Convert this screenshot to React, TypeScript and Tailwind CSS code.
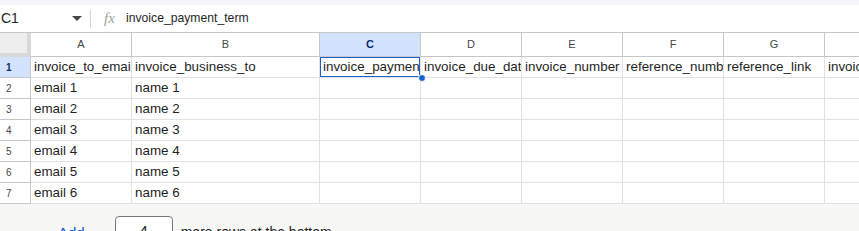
import React from 'react';

const cols = ['A', 'B', 'C', 'D', 'E', 'F', 'G', 'H'];
const headerRow = [
  'invoice_to_email',
  'invoice_business_to',
  'invoice_payment_term',
  'invoice_due_date',
  'invoice_number',
  'reference_number',
  'reference_link',
  'invoice_amount',
];
const rows = [1, 2, 3, 4, 5, 6].map((n) => [`email ${n}`, `name ${n}`]);

const gridCols = 'grid grid-cols-[31px_101px_188px_101px_101px_101px_101px_101px_101px]';

const App = () => {
  return (
    <div className="relative w-[859px] h-[231px] overflow-hidden bg-[#f7f8f5] text-[#1f1f1f]" style={{ fontFamily: '"Liberation Sans", Arial, sans-serif' }}>
      {/* top strip */}
      <div className="h-[5px] bg-[#f3f5f8]" />

      {/* formula bar */}
      <div className="h-[28px] bg-white border-b border-[#c7c7c7] flex items-center">
        <div className="w-[90px] flex items-center justify-between pr-[8px]">
          <span className="text-[14px] pl-[1px]">C1</span>
          <svg width="10" height="6" viewBox="0 0 10 6">
            <path d="M0 0 L10 0 L5 5 Z" fill="#444746" />
          </svg>
        </div>
        <div className="w-px h-[18px] bg-[#d5d5d5]" />
        <span className="ml-[13px] w-[14px] text-[15px] italic text-[#a0a0a0]" style={{ fontFamily: '"Liberation Serif", serif' }}>
          fx
        </span>
        <span className="ml-[8px] text-[12.2px] text-[#1f1f1f]">invoice_payment_term</span>
      </div>

      {/* grid */}
      <div className="bg-white w-[926px]">
        {/* column header */}
        <div className={`${gridCols} h-[24px]`}>
          <div className="bg-[#eeeeee] border-r-[4px] border-b-[4px] border-[#d8d8d8]" />
          {cols.map((c) => (
            <div
              key={c}
              className={
                c === 'C'
                  ? 'bg-[#d3e3fd] border-r border-b border-[#c7c7c7] flex items-center justify-center text-[11px] font-bold text-[#0b2d72]'
                  : 'bg-white border-r border-b border-[#c7c7c7] flex items-center justify-center text-[11px] text-[#444746]'
              }
            >
              {c}
            </div>
          ))}
        </div>

        {/* row 1 */}
        <div className={`${gridCols} h-[21px]`}>
          <div className="bg-[#d3e3fd] border-r border-b border-[#c7c7c7] flex items-center pl-[6px] text-[10px] font-bold text-[#0b2d72]">
            1
          </div>
          {headerRow.map((t, i) => (
            <div
              key={t}
              className="relative border-r border-b border-[#e1e1e1] flex items-center pl-[3px] overflow-hidden whitespace-nowrap text-[13.4px] text-[#1f1f1f]"
            >
              {t}
              {i === 2 && <div className="absolute inset-[-1px] border-2 border-[#1a5fd6]" />}
            </div>
          ))}
        </div>

        {/* data rows */}
        {rows.map((r, ri) => (
          <div key={ri} className={`${gridCols} h-[21px]`}>
            <div className="bg-white border-r border-b border-[#c7c7c7] flex items-center pl-[6px] text-[10px] text-[#444746]">
              {ri + 2}
            </div>
            {cols.map((c, ci) => (
              <div
                key={c}
                className="border-r border-b border-[#e1e1e1] flex items-center pl-[3px] overflow-hidden whitespace-nowrap text-[13.4px] text-[#1f1f1f]"
              >
                {r[ci] ?? ''}
              </div>
            ))}
          </div>
        ))}
      </div>

      {/* add rows */}
      <div className="flex items-start pt-[12px]">
        <span className="ml-[58px] mt-[6px] text-[15px] font-medium text-[#0b57d0]">Add</span>
        <div className="ml-[30px] w-[58px] h-[30px] rounded-[4px] border border-[#747775] bg-white flex items-center justify-center text-[15px] text-[#1f1f1f]">
          4
        </div>
        <span className="ml-[8px] mt-[6px] text-[14px] text-[#1f1f1f]">more rows at the bottom</span>
      </div>

      {/* fill handle */}
      <div className="absolute left-[418px] top-[74px] w-[8px] h-[8px] rounded-full bg-[#1a5fd6] border border-white" />
    </div>
  );
};

export default App;
